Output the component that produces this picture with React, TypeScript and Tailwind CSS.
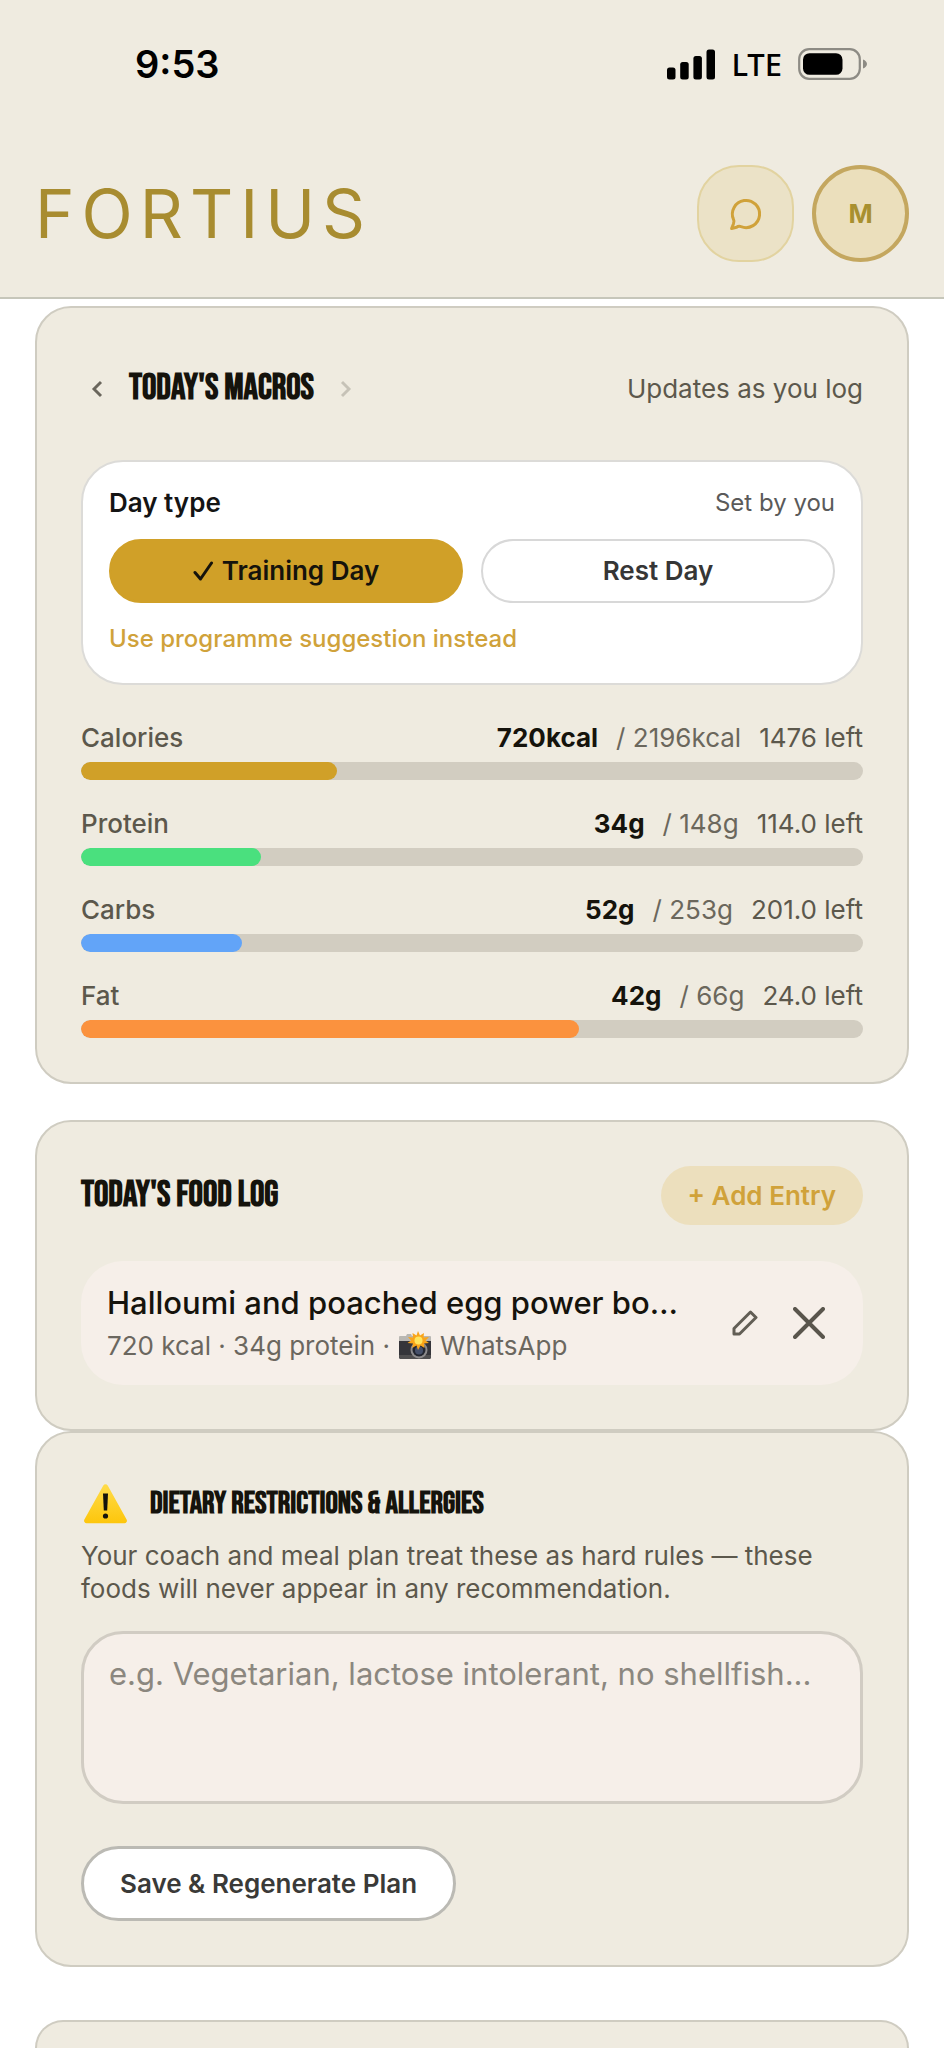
import { useState } from "react";
import type { ReactNode } from "react";
import clsx from "clsx";

type DayType = "training" | "rest";

const macros = [
  { name: "Calories", value: 720, target: 2196, unit: "kcal", left: "1476", color: "bg-[#d0a028]" },
  { name: "Protein", value: 34, target: 148, unit: "g", left: "114.0", color: "bg-[#4ae07e]" },
  { name: "Carbs", value: 52, target: 253, unit: "g", left: "201.0", color: "bg-[#62a4f8]" },
  { name: "Fat", value: 42, target: 66, unit: "g", left: "24.0", color: "bg-[#fb923e]" },
];

export default function App() {
  return (
    <div className="flex min-h-screen flex-col bg-white font-['Inter',sans-serif] text-[26px] leading-9 text-[#5c584c]">
      <Header />
      <main className="flex flex-1 flex-col px-[35px] pt-[7px]">
        <MacrosCard />
        <FoodLogCard />
        <RestrictionsCard />
        <section className="mt-[53px] flex-1 rounded-t-[36px] border-2 border-b-0 border-[#cfccc1] bg-[#efebe0]" />
      </main>
    </div>
  );
}

function Header() {
  return (
    <header className="border-b-2 border-[#c6c6ba] bg-[#efebe0] px-[35px] pt-11 pb-[35px]">
      <div className="flex h-10 items-center justify-between pr-[42px] pl-[100px] text-black">
        <span className="text-[38px] font-semibold">9:53</span>
        <div className="flex items-center gap-4">
          <SignalIcon />
          <span className="font-['Noto_Sans',sans-serif] text-[31px] font-medium">LTE</span>
          <BatteryIcon />
        </div>
      </div>
      <div className="mt-[81px] flex items-center justify-between">
        <h1 className="text-[67px] leading-[72px] tracking-[7px] text-[#a88c30]">FORTIUS</h1>
        <div className="flex gap-[18px]">
          <button
            type="button"
            aria-label="Messages"
            className="flex size-[97px] items-center justify-center rounded-[42px] border-2 border-[#e2d3a0] bg-[#ebe2c7]"
          >
            <ChatIcon />
          </button>
          <button
            type="button"
            className="flex size-[97px] items-center justify-center rounded-full border-4 border-[#c4a75f] bg-[#ebdfbc] font-bold text-[#a8902f]"
          >
            M
          </button>
        </div>
      </div>
    </header>
  );
}

function Card({ className, children }: { className?: string; children: ReactNode }) {
  return (
    <section
      className={clsx("rounded-[36px] border-2 border-[#cfccc1] bg-[#efebe0] px-11 py-11", className)}
    >
      {children}
    </section>
  );
}

function Heading({ className, children }: { className?: string; children: ReactNode }) {
  return (
    <h2
      className={clsx(
        "font-['Bebas_Neue','Liberation_Sans_Narrow','Liberation_Sans',sans-serif] font-bold text-[#15130c] uppercase",
        className,
      )}
    >
      {children}
    </h2>
  );
}

function MacrosCard() {
  const [day, setDay] = useState<DayType>("training");

  return (
    <Card>
      <div className="flex h-[74px] items-center justify-between">
        <div className="flex items-center gap-4">
          <button type="button" aria-label="Previous day" className="flex w-8 justify-center text-[#6a665c]">
            <Chevron d="M10 2 3 9l7 7" />
          </button>
          <Heading className="text-[36px]">Today's Macros</Heading>
          <button type="button" aria-label="Next day" className="flex w-8 justify-center text-[#c6c2b7]">
            <Chevron d="m3 2 7 7-7 7" />
          </button>
        </div>
        <p>Updates as you log</p>
      </div>

      <div className="mt-[34px] rounded-[42px] border-2 border-[#dcdbd8] bg-white px-[26px] pt-[23px] pb-[26px]">
        <div className="flex items-center justify-between">
          <h3 className="font-semibold text-[#141414]">Day type</h3>
          <span className="text-[24px] text-[#5a5a5a]">Set by you</span>
        </div>
        <div className="mt-[18px] grid grid-cols-2 gap-[18px]">
          <DayButton active={day === "training"} onClick={() => setDay("training")}>
            Training Day
          </DayButton>
          <DayButton active={day === "rest"} onClick={() => setDay("rest")}>
            Rest Day
          </DayButton>
        </div>
        <button type="button" className="mt-[18px] block text-[24px] font-medium text-[#d0a23a]">
          Use programme suggestion instead
        </button>
      </div>

      <div className="mt-[35px] space-y-[26px]">
        {macros.map((macro) => (
          <div key={macro.name}>
            <div className="flex items-center justify-between">
              <span className="font-medium">{macro.name}</span>
              <div className="flex gap-[18px]">
                <span className="font-bold text-[#15130c]">
                  {macro.value}
                  {macro.unit}
                </span>
                <span className="text-[#6b675c]">
                  / {macro.target}
                  {macro.unit}
                </span>
                <span>{macro.left} left</span>
              </div>
            </div>
            <div className="mt-1.5 h-[18px] overflow-hidden rounded-full bg-[#d2cdc1]">
              <div
                className={clsx("h-full rounded-full", macro.color)}
                style={{ width: `${(macro.value / macro.target) * 100}%` }}
              />
            </div>
          </div>
        ))}
      </div>
    </Card>
  );
}

function DayButton(props: { active: boolean; onClick: () => void; children: ReactNode }) {
  return (
    <button
      type="button"
      aria-pressed={props.active}
      onClick={props.onClick}
      className={clsx(
        "flex h-16 items-center justify-center gap-2 rounded-full border-2 font-semibold",
        props.active
          ? "border-[#d0a028] bg-[#d0a028] text-[#15130c]"
          : "border-[#d8d8d8] bg-white text-[#363636]",
      )}
    >
      {props.active && <CheckIcon />}
      {props.children}
    </button>
  );
}

function FoodLogCard() {
  return (
    <Card className="mt-9">
      <div className="flex items-center justify-between">
        <Heading className="text-[36px]">Today's Food Log</Heading>
        <button
          type="button"
          className="h-[59px] rounded-full bg-[#ecdfbd] px-[27px] font-semibold text-[#d0a23a]"
        >
          + Add Entry
        </button>
      </div>
      <div className="mt-9 flex items-center rounded-[42px] bg-[#f6efe9] px-[26px] py-[21px]">
        <div className="min-w-0 flex-1">
          <p className="text-[31px] leading-[42px] font-medium text-[#15130c]">
            Halloumi and poached egg power bo…
          </p>
          <p className="mt-1 flex items-center gap-2 text-[#6b675f]">
            <span>720 kcal · 34g protein ·</span>
            <CameraIcon />
            <span>WhatsApp</span>
          </p>
        </div>
        <button type="button" aria-label="Edit entry" className="ml-8 flex w-14 justify-center">
          <PencilIcon />
        </button>
        <button type="button" aria-label="Delete entry" className="ml-2 flex w-14 justify-center">
          <CloseIcon />
        </button>
      </div>
    </Card>
  );
}

function RestrictionsCard() {
  return (
    <Card>
      <div className="flex h-[54px] items-center gap-[21px]">
        <WarningIcon />
        <Heading className="text-[31px]">Dietary Restrictions &amp; Allergies</Heading>
      </div>
      <p id="restrictions-help" className="mt-2 leading-[33px]">
        Your coach and meal plan treat these as hard rules — these foods will never appear in any
        recommendation.
      </p>
      <textarea
        aria-label="Dietary restrictions and allergies"
        aria-describedby="restrictions-help"
        placeholder="e.g. Vegetarian, lactose intolerant, no shellfish..."
        className="mt-[26px] block h-[173px] w-full resize-none rounded-[42px] border-3 border-[#d1ccc3] bg-[#f6efe9] px-[25px] py-[18px] text-[31px] leading-[44px] text-[#15130c] placeholder:text-[#8b877f]"
      />
      <button
        type="button"
        className="mt-[42px] block h-[75px] rounded-full border-3 border-[#bbbab4] bg-white px-9 font-semibold text-[#3a3a38]"
      >
        Save &amp; Regenerate Plan
      </button>
    </Card>
  );
}

function SignalIcon() {
  return (
    <svg width="48" height="31" viewBox="0 0 48 31" fill="currentColor">
      <rect x="0" y="18.5" width="8.5" height="12" rx="2.5" />
      <rect x="13.2" y="13" width="8.5" height="17.5" rx="2.5" />
      <rect x="26.4" y="7" width="8.5" height="23.5" rx="2.5" />
      <rect x="39.5" y="0.5" width="8.5" height="30" rx="2.5" />
    </svg>
  );
}

function BatteryIcon() {
  return (
    <svg width="69" height="32" viewBox="0 0 69 32" fill="none">
      <rect x="1.2" y="1.2" width="60.6" height="29.6" rx="10" stroke="#8d8b84" strokeWidth="2.2" />
      <rect x="5" y="5.2" width="39.5" height="21.6" rx="6.5" fill="#000" />
      <path d="M65 11.5c2.5 1 4 2.6 4 4.5s-1.5 3.5-4 4.5z" fill="#8d8b84" />
    </svg>
  );
}

function ChatIcon() {
  return (
    <svg width="36" height="36" viewBox="-18 -18 36 36" fill="none" stroke="#d0a23a" strokeWidth="3" strokeLinejoin="round">
      <path d="M-12.5 5.4C-11.5 7-12 8.3-12.6 10L-14.4 14.6L-9.5 13.3C-8 12.2-6.5 12-4.9 12.7A13.6 13.6 0 1 0-12.5 5.4Z" />
    </svg>
  );
}

function Chevron({ d }: { d: string }) {
  return (
    <svg width="13" height="18" viewBox="0 0 13 18" fill="none" stroke="currentColor" strokeWidth="2.9">
      <path d={d} />
    </svg>
  );
}

function CheckIcon() {
  return (
    <svg width="21" height="20" viewBox="0 0 21 20" fill="none" stroke="currentColor" strokeWidth="3" strokeLinecap="round" strokeLinejoin="round">
      <path d="M2 11.5 7.5 18 18.5 2" />
    </svg>
  );
}

function PencilIcon() {
  return (
    <svg width="26" height="26" viewBox="0 0 26 26" fill="none" stroke="#625e55" strokeWidth="3" strokeLinejoin="round">
      <path d="M2 24v-5.5L18.5 2 24 7.5 7.5 24z" />
    </svg>
  );
}

function CloseIcon() {
  return (
    <svg width="32" height="32" viewBox="0 0 32 32" fill="none" stroke="#59554c" strokeWidth="4" strokeLinecap="round">
      <path d="M2 2 30 30M30 2 2 30" />
    </svg>
  );
}

function CameraIcon() {
  return (
    <svg width="34" height="30" viewBox="0 0 34 30">
      <path d="M2 5h6l1-2h4l1 2h18a1 1 0 0 1 1 1v6H1V6a1 1 0 0 1 1-1z" fill="#b9b7b2" />
      <path d="M1 10h32v16a2 2 0 0 1-2 2H3a2 2 0 0 1-2-2z" fill="#35353a" />
      <path d="M1 24h32v2a2 2 0 0 1-2 2H3a2 2 0 0 1-2-2z" fill="#504f50" />
      <circle cx="21" cy="19" r="8.5" fill="#8d8b8c" />
      <circle cx="21" cy="19" r="6.5" fill="#232630" />
      <circle cx="21" cy="19.5" r="4" fill="#46506a" />
      <path
        d="m20 0 2 4.5L26 2l-.5 4.5L31 6l-3.5 3.5L31 12l-5 .5.5 4.5-4-2.5L20 19l-1.5-4.5L14 17l1-4.5L9.5 12 13 9.5 10 6l5 .5L14.5 2 18.5 4.5z"
        fill="#f9a51a"
      />
      <circle cx="20.5" cy="9.5" r="4" fill="#ffe45c" />
    </svg>
  );
}

function WarningIcon() {
  return (
    <svg width="48" height="42" viewBox="0 0 48 42">
      <defs>
        <linearGradient id="warning" x1="0" y1="0" x2="0" y2="1">
          <stop offset="0" stopColor="#ffdc4a" />
          <stop offset="1" stopColor="#fdc60c" />
        </linearGradient>
      </defs>
      <path
        d="M22.3 2.5a2.6 2.6 0 0 1 4.4 0L45.6 36.5a2.5 2.5 0 0 1-2.2 3.7H5.6a2.5 2.5 0 0 1-2.2-3.7z"
        fill="url(#warning)"
      />
      <path d="M22 10.5h5l-.8 17h-3.4z" fill="#15130c" />
      <circle cx="24.5" cy="33" r="2.6" fill="#15130c" />
    </svg>
  );
}
